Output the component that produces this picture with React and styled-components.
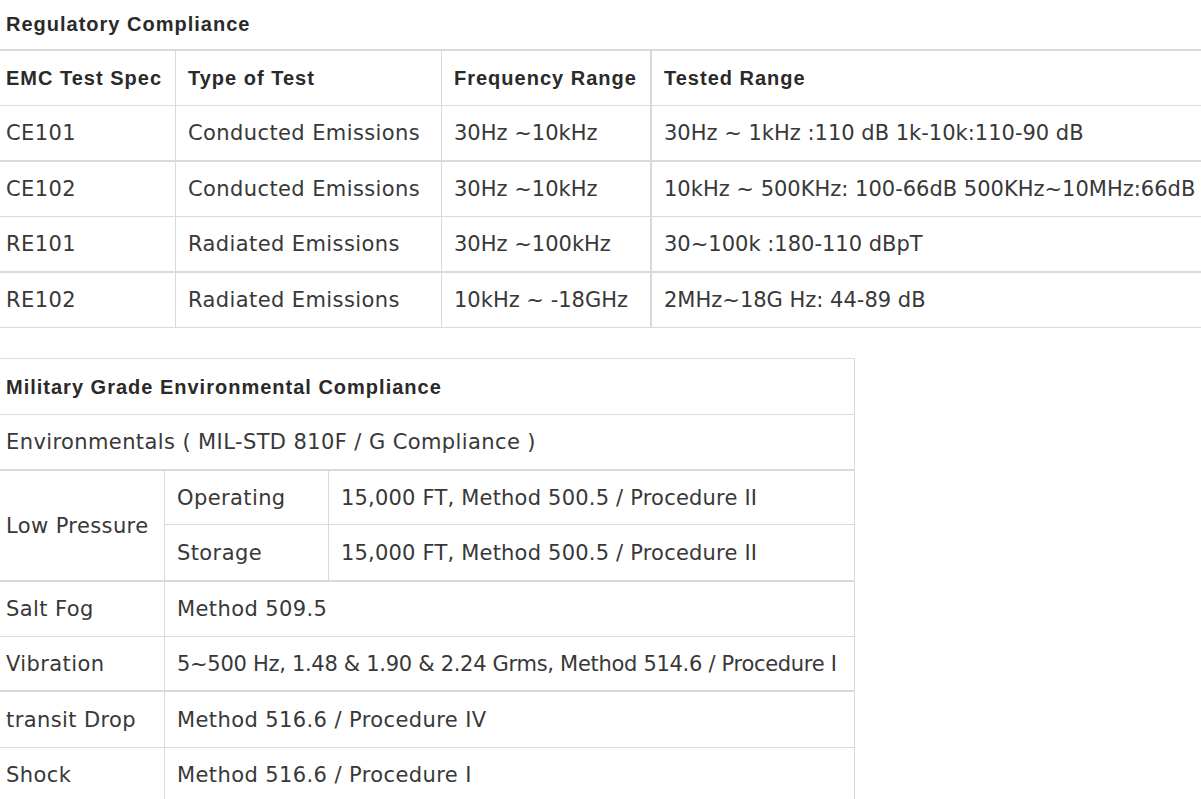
import React from "react"
import styled, { createGlobalStyle } from "styled-components"

const Global = createGlobalStyle`
    html, body {
        margin: 0;
        padding: 0;
        background: #fff;
    }
    body {
        font-family: "DejaVu Sans", "Liberation Sans", sans-serif;
        color: #383838;
        overflow: hidden;
    }
`

const line = "#dadada"

const Page = styled.div`
    width: 1201px;
`

const Heading = styled.div`
    height: 49px;
    display: flex;
    align-items: center;
    padding-left: 6px;
    font-family: "Liberation Sans", Arial, sans-serif;
    font-weight: 700;
    font-size: 20px;
    letter-spacing: 1px;
    color: #2a2a2a;
`

const Table = styled.table`
    border-collapse: separate;
    border-spacing: 0;
    table-layout: fixed;
    width: ${p => p.$width}px;
    border-top: ${p => p.$topWidth || 1}px solid ${line};
    border-right: ${p => p.$framed ? `1px solid ${line}` : "none"};
    margin-top: ${p => p.$gap || 0}px;
`

const Cell = styled.td`
    box-sizing: border-box;
    height: ${p => (p.$tall || 54) + (p.$heavy ? 2 : 1)}px;
    padding: 0 12px 0 ${p => p.$lead ? 6 : 12}px;
    line-height: 24px;
    font-size: 21px;
    letter-spacing: ${p => p.$track ?? 0.4}px;
    white-space: nowrap;
    vertical-align: middle;
    border-bottom: ${p => p.$heavy ? 2 : 1}px solid ${line};
    border-right: ${p => p.$last ? "none" : `${p.$sep || 1}px solid ${line}`};
`

const Head = styled(Cell).attrs({ as: "th" })`
    text-align: left;
    font-family: "Liberation Sans", Arial, sans-serif;
    font-weight: 700;
    font-size: 20px;
    letter-spacing: 1px;
    color: #2a2a2a;
`

const emc = [
    ["CE101", "Conducted Emissions", "30Hz ~10kHz", "30Hz ~ 1kHz :110 dB 1k-10k:110-90 dB", true],
    ["CE102", "Conducted Emissions", "30Hz ~10kHz", "10kHz ~ 500KHz: 100-66dB 500KHz~10MHz:66dB", false],
    ["RE101", "Radiated Emissions", "30Hz ~100kHz", "30~100k :180-110 dBpT", true],
    ["RE102", "Radiated Emissions", "10kHz ~ -18GHz", "2MHz~18G Hz: 44-89 dB", false],
]

// name, value, row height, heavy rule below, tracking
const env = [
    ["Salt Fog", "Method 509.5", 54, false],
    ["Vibration", "5~500 Hz, 1.48 & 1.90 & 2.24 Grms, Method 514.6 / Procedure I", 53, true, -0.3],
    ["transit Drop", "Method 516.6 / Procedure IV", 55, false],
    ["Shock", "Method 516.6 / Procedure I", 54, false],
]

const App = () =>
    <Page>
        <Global />
        <Heading>Regulatory Compliance</Heading>
        <Table $width={1201} $topWidth={2}>
            <colgroup>
                <col style={{ width: 176 }} />
                <col style={{ width: 266 }} />
                <col style={{ width: 210 }} />
                <col />
            </colgroup>
            <thead>
                <tr>
                    <Head $lead>EMC Test Spec</Head>
                    <Head>Type of Test</Head>
                    <Head $sep={2}>Frequency Range</Head>
                    <Head $last>Tested Range</Head>
                </tr>
            </thead>
            <tbody>
                {emc.map(([spec, type, freq, range, heavy]) =>
                    <tr key={spec}>
                        <Cell $lead $heavy={heavy}>{spec}</Cell>
                        <Cell $heavy={heavy}>{type}</Cell>
                        <Cell $heavy={heavy} $sep={2} $track={0}>{freq}</Cell>
                        <Cell $heavy={heavy} $last $track={0}>{range}</Cell>
                    </tr>
                )}
            </tbody>
        </Table>

        <Table $width={855} $gap={30} $framed>
            <colgroup>
                <col style={{ width: 165 }} />
                <col style={{ width: 164 }} />
                <col />
            </colgroup>
            <tbody>
                <tr>
                    <Head $lead colSpan={3} $last $tall={55}>Military Grade Environmental Compliance</Head>
                </tr>
                <tr>
                    <Cell $lead colSpan={3} $last $heavy>Environmentals ( MIL-STD 810F / G Compliance )</Cell>
                </tr>
                <tr>
                    <Cell $lead rowSpan={2} $heavy>Low Pressure</Cell>
                    <Cell $tall={53}>Operating</Cell>
                    <Cell $last $tall={53} $track={0.2}>15,000 FT, Method 500.5 / Procedure II</Cell>
                </tr>
                <tr>
                    <Cell $heavy $tall={55}>Storage</Cell>
                    <Cell $heavy $last $tall={55} $track={0.2}>15,000 FT, Method 500.5 / Procedure II</Cell>
                </tr>
                {env.map(([name, value, tall, heavy, track]) =>
                    <tr key={name}>
                        <Cell $lead $tall={tall} $heavy={heavy}>{name}</Cell>
                        <Cell colSpan={2} $tall={tall} $heavy={heavy} $last $track={track}>{value}</Cell>
                    </tr>
                )}
            </tbody>
        </Table>
    </Page>

export default App
